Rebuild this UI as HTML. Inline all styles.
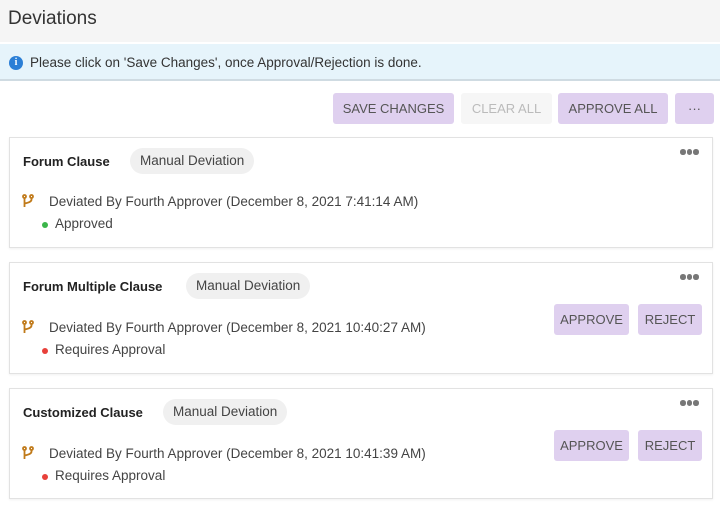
<!DOCTYPE html>
<html><head><style>
*{box-sizing:border-box;margin:0;padding:0}
body{width:720px;height:509px;background:#fff;font-family:"Liberation Sans",sans-serif;color:#333;position:relative;overflow:hidden}
.hdr{position:absolute;left:0;top:0;width:720px;height:42px;background:#f5f5f5}
.hdr h1{position:absolute;left:8px;top:8px;font-size:19px;font-weight:normal;color:#333}
.info{position:absolute;left:0;top:44px;width:720px;height:37px;background:#e6f4fb;border-bottom:2px solid #cfdbe2;font-size:13.5px;color:#333}
.info .i{position:absolute;left:9px;top:12px;width:14px;height:14px;border-radius:50%;background:#2b7fd6;color:#fff;font-size:10px;font-weight:bold;text-align:center;line-height:14px;font-family:"Liberation Serif",serif}
.info span.t{position:absolute;left:30px;top:11px}
.btn{position:absolute;top:93px;height:31px;background:#dfd0ef;border-radius:3px;font-size:13px;color:#555;text-align:center;line-height:31px}
.card{position:absolute;left:9px;width:704px;background:#fff;border:1px solid #e2e2e2;box-shadow:0 1px 2px rgba(0,0,0,.06)}
.title{position:absolute;left:13px;font-weight:bold;font-size:13px;color:#222}
.tag{position:absolute;height:26px;line-height:26px;background:#f0f0f0;border-radius:13px;padding:0 10px;font-size:13.5px;color:#444}
.dots{position:absolute;right:12px;top:11px;width:20px;height:6px;display:flex;gap:1px}
.dots i{display:block;width:5.5px;height:5.5px;border-radius:50%;background:#777;flex:none}
.by{position:absolute;left:39px;font-size:13.5px;color:#444}
.st{position:absolute;left:45px;font-size:13.5px;color:#444}
.dot{position:absolute;left:32px;width:6px;height:6px;border-radius:50%}
.ic{position:absolute;left:12px}
.sb{position:absolute;height:31px;background:#dfd0ef;border-radius:3px;font-size:13px;color:#555;text-align:center;line-height:31px}
</style></head><body>
<div class="hdr"><h1>Deviations</h1></div>
<div class="info"><div class="i">i</div><span class="t">Please click on 'Save Changes', once Approval/Rejection is done.</span></div>
<div class="btn" style="left:333px;width:121px">SAVE CHANGES</div>
<div class="btn" style="left:461px;width:91px;background:#f6f6f6;color:#bbb">CLEAR ALL</div>
<div class="btn" style="left:558px;width:110px">APPROVE ALL</div>
<div class="btn" style="left:675px;width:39px">···</div>

<div class="card" style="top:137px;height:111px">
<div class="title" style="top:16px">Forum Clause</div>
<div class="tag" style="left:120px;top:10px">Manual Deviation</div>
<div class="dots"><i></i><i></i><i></i></div>
<svg class="ic" style="top:56px" width="12" height="14" viewBox="0 0 12 14"><g fill="none" stroke="#c07a1a" stroke-width="1.8"><circle cx="2.5" cy="2.5" r="1.5"/><circle cx="9.5" cy="2.5" r="1.5"/><path d="M2.5 4v9M9.5 4v1.5c0 2-2 3-7 4"/></g></svg>
<div class="by" style="top:56px">Deviated By Fourth Approver (December 8, 2021 7:41:14 AM)</div>
<div class="dot" style="top:84px;background:#3bb54a"></div>
<div class="st" style="top:78px">Approved</div>
</div>

<div class="card" style="top:262px;height:112px">
<div class="title" style="top:16px">Forum Multiple Clause</div>
<div class="tag" style="left:176px;top:10px">Manual Deviation</div>
<div class="dots"><i></i><i></i><i></i></div>
<svg class="ic" style="top:57px" width="12" height="14" viewBox="0 0 12 14"><g fill="none" stroke="#c07a1a" stroke-width="1.8"><circle cx="2.5" cy="2.5" r="1.5"/><circle cx="9.5" cy="2.5" r="1.5"/><path d="M2.5 4v9M9.5 4v1.5c0 2-2 3-7 4"/></g></svg>
<div class="by" style="top:57px">Deviated By Fourth Approver (December 8, 2021 10:40:27 AM)</div>
<div class="dot" style="top:85px;background:#e8403a"></div>
<div class="st" style="top:79px">Requires Approval</div>
<div class="sb" style="left:544px;width:75px;top:41px">APPROVE</div>
<div class="sb" style="left:628px;width:64px;top:41px">REJECT</div>
</div>

<div class="card" style="top:388px;height:111px">
<div class="title" style="top:16px">Customized Clause</div>
<div class="tag" style="left:153px;top:10px">Manual Deviation</div>
<div class="dots"><i></i><i></i><i></i></div>
<svg class="ic" style="top:57px" width="12" height="14" viewBox="0 0 12 14"><g fill="none" stroke="#c07a1a" stroke-width="1.8"><circle cx="2.5" cy="2.5" r="1.5"/><circle cx="9.5" cy="2.5" r="1.5"/><path d="M2.5 4v9M9.5 4v1.5c0 2-2 3-7 4"/></g></svg>
<div class="by" style="top:57px">Deviated By Fourth Approver (December 8, 2021 10:41:39 AM)</div>
<div class="dot" style="top:85px;background:#e8403a"></div>
<div class="st" style="top:79px">Requires Approval</div>
<div class="sb" style="left:544px;width:75px;top:41px">APPROVE</div>
<div class="sb" style="left:628px;width:64px;top:41px">REJECT</div>
</div>
</body></html>
